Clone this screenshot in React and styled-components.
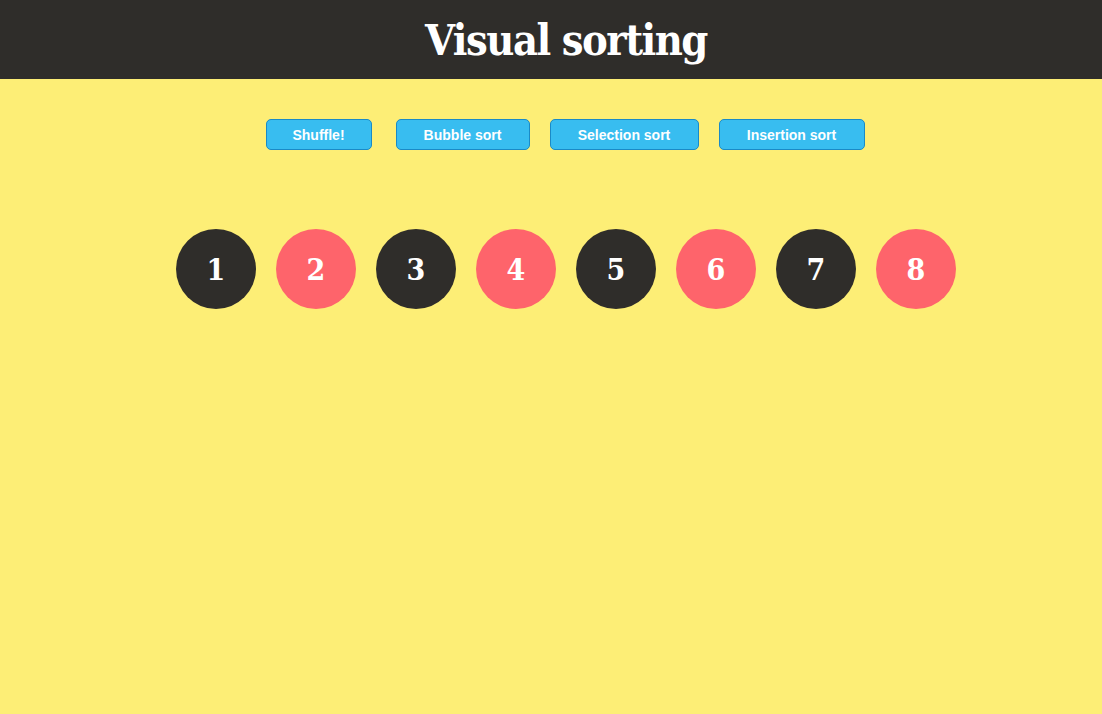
import styled, { createGlobalStyle } from 'styled-components';

const GlobalStyle = createGlobalStyle`
  html, body {
    margin: 0;
    padding: 0;
    background: #fdee76;
    min-height: 100%;
  }
  body {
    font-family: 'Liberation Sans', Arial, sans-serif;
  }
`;

const numbers = [1, 2, 3, 4, 5, 6, 7, 8];
const buttons = [
  { label: 'Shuffle!', width: 106, gap: 24 },
  { label: 'Bubble sort', width: 134, gap: 20 },
  { label: 'Selection sort', width: 149, gap: 20 },
  { label: 'Insertion sort', width: 146, gap: 0 },
];

export default function App() {
  return (
    <>
      <GlobalStyle />
      <Page>
        <Header>
          <Title>Visual sorting</Title>
        </Header>
        <Controls>
          {buttons.map((b) => (
            <Button key={b.label} $w={b.width} $gap={b.gap}>
              {b.label}
            </Button>
          ))}
        </Controls>
        <Balls>
          {numbers.map((n) => (
            <Ball key={n} $red={n % 2 === 0}>
              {n}
            </Ball>
          ))}
        </Balls>
      </Page>
    </>
  );
}

const Page = styled.div`
  min-height: 714px;
  background: #fdee76;
`;

const Header = styled.header`
  height: 79px;
  background: #2f2d2a;
  display: flex;
  align-items: center;
  justify-content: center;
  padding-left: 30px;
`;

const Title = styled.h1`
  margin: 0;
  color: #fff;
  font-family: 'Roboto Slab', 'DejaVu Serif', serif;
  font-stretch: condensed;
  font-weight: bold;
  font-size: 43px;
  letter-spacing: -1.5px;
`;

const Controls = styled.div`
  display: flex;
  justify-content: center;
  padding: 40px 0 0 28px;
`;

const Button = styled.button`
  width: ${(p) => p.$w}px;
  height: 31px;
  margin-right: ${(p) => p.$gap}px;
  padding: 0;
  background: #38bdf0;
  border: 1px solid #1a8ac7;
  border-radius: 5px;
  color: #fff;
  font-family: 'Liberation Sans', Arial, sans-serif;
  font-weight: bold;
  font-size: 14px;
  cursor: pointer;
`;

const Balls = styled.div`
  display: flex;
  justify-content: center;
  gap: 20px;
  padding: 79px 0 0 30px;
`;

const Ball = styled.div`
  width: 80px;
  height: 80px;
  border-radius: 50%;
  background: ${(p) => (p.$red ? '#fe646b' : '#2f2d2a')};
  color: #fff;
  display: flex;
  align-items: center;
  justify-content: center;
  font-family: 'Roboto Slab', 'DejaVu Serif', serif;
  font-stretch: condensed;
  font-weight: bold;
  font-size: 30px;
`;
